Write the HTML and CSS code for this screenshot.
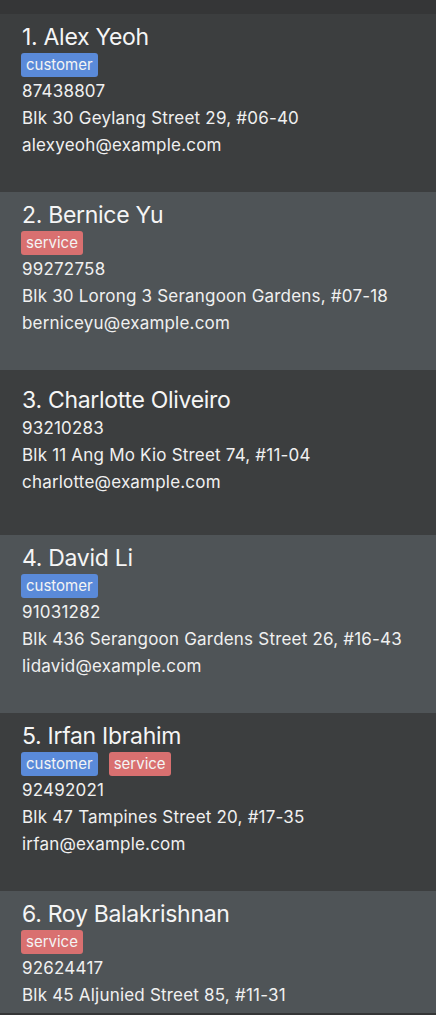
FILE: index.html
```html
<!DOCTYPE html>
<html>
<head>
<meta charset="utf-8">
<link rel="stylesheet" href="styles.css">
</head>
<body>
<div class="app">
  <div class="list">
    <div class="card card--even">
      <div class="name">1. Alex Yeoh</div>
      <div class="tags"><span class="tag tag--customer">customer</span></div>
      <div class="line">87438807</div>
      <div class="line">Blk 30 Geylang Street 29, #06-40</div>
      <div class="line">alexyeoh@example.com</div>
    </div>
    <div class="card card--odd">
      <div class="name">2. Bernice Yu</div>
      <div class="tags"><span class="tag tag--service">service</span></div>
      <div class="line">99272758</div>
      <div class="line">Blk 30 Lorong 3 Serangoon Gardens, #07-18</div>
      <div class="line">berniceyu@example.com</div>
    </div>
    <div class="card card--even card--notags">
      <div class="name">3. Charlotte Oliveiro</div>
      <div class="line">93210283</div>
      <div class="line">Blk 11 Ang Mo Kio Street 74, #11-04</div>
      <div class="line">charlotte@example.com</div>
    </div>
    <div class="card card--odd">
      <div class="name">4. David Li</div>
      <div class="tags"><span class="tag tag--customer">customer</span></div>
      <div class="line">91031282</div>
      <div class="line">Blk 436 Serangoon Gardens Street 26, #16-43</div>
      <div class="line">lidavid@example.com</div>
    </div>
    <div class="card card--even">
      <div class="name">5. Irfan Ibrahim</div>
      <div class="tags"><span class="tag tag--customer">customer</span><span class="tag tag--service">service</span></div>
      <div class="line">92492021</div>
      <div class="line">Blk 47 Tampines Street 20, #17-35</div>
      <div class="line">irfan@example.com</div>
    </div>
    <div class="card card--odd card--last">
      <div class="name">6. Roy Balakrishnan</div>
      <div class="tags"><span class="tag tag--service">service</span></div>
      <div class="line">92624417</div>
      <div class="line">Blk 45 Aljunied Street 85, #11-31</div>
    </div>
  </div>
</div>
</body>
</html>
```
FILE: styles.css
```css
html, body {
  margin: 0;
  padding: 0;
  background: #353637;
  overflow: hidden;
}
.app {
  height: 1015px;
  padding-top: 14px;
  box-sizing: border-box;
  background: #353637;
  font-family: Inter, "Noto Sans", sans-serif;
  color: #f0f0f0;
}
.list {
  height: 999px;
  overflow: hidden;
}
.card {
  padding: 8px 22px 33px 22px;
  height: 178px;
  box-sizing: border-box;
}
.card--even { background: #3c3e3f; }
.card--odd { background: #4f5457; }
.card--notags {
  padding-top: 15px;
  height: 165px;
}
.name {
  font-size: 23px;
  letter-spacing: -0.3px;
  line-height: 30px;
  color: #f5f5f5;
  white-space: nowrap;
}
.tags {
  display: flex;
  gap: 11px;
  margin: 1px 0 1px -1px;
}
.tag {
  height: 24px;
  line-height: 24px;
  padding: 0 5px;
  border-radius: 3px;
  font-size: 15px;
  color: #f4f4f4;
}
.tag--customer { background: #5a8ad9; }
.tag--service { background: #d97070; }
.line {
  font-size: 17px;
  letter-spacing: 0.2px;
  line-height: 27px;
  white-space: nowrap;
}
```
